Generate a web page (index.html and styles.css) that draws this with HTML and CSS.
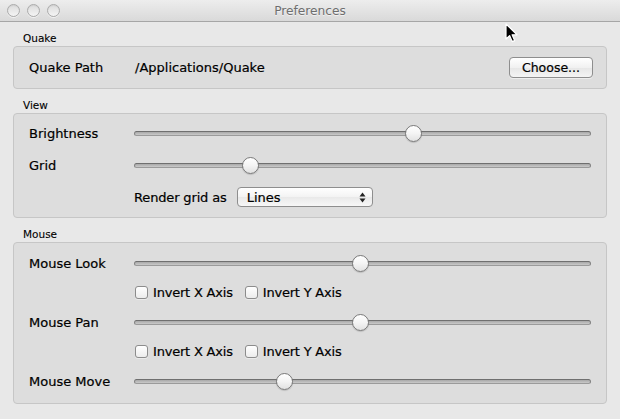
FILE: index.html
```html
<!DOCTYPE html>
<html>
<head>
<meta charset="utf-8">
<title>Preferences</title>
<link rel="stylesheet" href="styles.css">
</head>
<body>
<div class="window">
  <div class="titlebar">
    <div class="lights">
      <span class="light"></span>
      <span class="light"></span>
      <span class="light"></span>
    </div>
    <div class="title">Preferences</div>
  </div>

  <div class="content">
    <div class="section first">
      <div class="section-label">Quake</div>
      <div class="group group-quake">
        <div class="row">
          <div class="row-label">Quake Path</div>
          <div class="path">/Applications/Quake</div>
          <button class="btn">Choose...</button>
        </div>
      </div>
    </div>

    <div class="section">
      <div class="section-label">View</div>
      <div class="group group-view">
        <div class="row">
          <div class="row-label">Brightness</div>
          <div class="slider"><div class="track"></div><div class="knob" style="left:61.1%"></div></div>
        </div>
        <div class="row">
          <div class="row-label">Grid</div>
          <div class="slider"><div class="track"></div><div class="knob" style="left:25.4%"></div></div>
        </div>
        <div class="row">
          <div class="row-label"></div>
          <div class="inline-label">Render grid as</div>
          <div class="popup"><span class="popup-text">Lines</span>
            <svg class="popup-arrows" width="7" height="11" viewBox="0 0 7 11"><path d="M3.5 0.5 L6.5 4.5 L0.5 4.5 Z M0.5 6.5 L6.5 6.5 L3.5 10.5 Z" fill="#222"/></svg>
          </div>
        </div>
      </div>
    </div>

    <div class="section">
      <div class="section-label">Mouse</div>
      <div class="group group-mouse">
        <div class="row row-slider">
          <div class="row-label">Mouse Look</div>
          <div class="slider"><div class="track"></div><div class="knob" style="left:49.5%"></div></div>
        </div>
        <div class="row row-check">
          <div class="row-label"></div>
          <label class="check"><span class="box"></span>Invert X Axis</label>
          <label class="check"><span class="box"></span>Invert Y Axis</label>
        </div>
        <div class="row row-slider">
          <div class="row-label">Mouse Pan</div>
          <div class="slider"><div class="track"></div><div class="knob" style="left:49.5%"></div></div>
        </div>
        <div class="row row-check">
          <div class="row-label"></div>
          <label class="check"><span class="box"></span>Invert X Axis</label>
          <label class="check"><span class="box"></span>Invert Y Axis</label>
        </div>
        <div class="row row-slider">
          <div class="row-label">Mouse Move</div>
          <div class="slider"><div class="track"></div><div class="knob" style="left:33%"></div></div>
        </div>
      </div>
    </div>
  </div>

  <svg class="cursor" width="14" height="21" viewBox="0 0 14 21">
    <path d="M1 1 L1 16 L4.6 12.6 L7.2 18.6 L9.6 17.6 L7.1 11.8 L12 11.8 Z" fill="#000" stroke="#fff" stroke-width="1.2" stroke-linejoin="round"/>
  </svg>
</div>
</body>
</html>
```

FILE: styles.css
```css
* { box-sizing: border-box; }
html, body {
  margin: 0;
  padding: 0;
  background: #e8e8e8;
}
body {
  font-family: "DejaVu Sans", "Liberation Sans", sans-serif;
  color: #000;
}
.window {
  position: relative;
  width: 620px;
  height: 419px;
  background: #e8e8e8;
  overflow: hidden;
}
.titlebar {
  position: relative;
  height: 22px;
  background: linear-gradient(#ededed, #d9d9d9);
  border-bottom: 1px solid #a6a6a6;
  display: flex;
  align-items: center;
}
.lights {
  display: flex;
  gap: 7px;
  padding-left: 7px;
}
.light {
  width: 13px;
  height: 13px;
  border-radius: 50%;
  border: 1px solid #ababab;
  background: linear-gradient(#dcdcdc, #f4f4f4);
  box-shadow: inset 0 1px 1px rgba(0,0,0,0.06), 0 1px 0 rgba(255,255,255,0.6);
}
.title {
  position: absolute;
  left: 0;
  right: 0;
  top: 0;
  height: 21px;
  line-height: 22px;
  text-align: center;
  font-size: 12.2px;
  color: #6e6e6e;
  text-shadow: 0 1px 0 rgba(255,255,255,0.6);
}
.content {
  padding: 0 13px;
}
.section { margin-top: 9px; }
.section-label {
  font-size: 10.5px;
  line-height: 15px;
  height: 15px;
  padding-left: 10px;
  -webkit-text-stroke: 0.1px #000;
}
.group {
  border: 1px solid #c6c6c6;
  border-radius: 4px;
  background: #dddddd;
  padding: 0 15px;
}
.group-quake {
  height: 43px;
  display: flex;
  align-items: center;
  padding-right: 13px;
}
.group-quake .row { flex: 1; height: 41px; }
.group-view {
  height: 105px;
  padding-top: 3px;
}
.group-view .row { height: 32px; }
.group-mouse {
  height: 162px;
  padding-top: 5px;
}
.row {
  display: flex;
  align-items: center;
}
.row-slider { height: 30px; }
.row-check { height: 29px; }
.row-label,
.path,
.inline-label,
.check,
.popup,
.btn {
  -webkit-text-stroke: 0.2px #000;
}
.row-label {
  width: 105px;
  flex: none;
  font-size: 13px;
}
.path {
  font-size: 13px;
  flex: 1;
  padding-left: 1px;
}
.btn {
  font-family: inherit;
  font-size: 12.5px;
  color: #000;
  width: 84px;
  height: 21px;
  padding: 0;
  border: 1px solid #8e8e8e;
  border-radius: 4px;
  background: linear-gradient(#ffffff, #f1f1f1 50%, #e6e6e6 51%, #f4f4f4);
  box-shadow: 0 1px 0 rgba(255,255,255,0.5);
  line-height: 19px;
}
.slider {
  position: relative;
  flex: 1;
  height: 20px;
  display: flex;
  align-items: center;
}
.track {
  width: 100%;
  height: 5px;
  border-radius: 3px;
  border: 1px solid #838383;
  border-top-color: #6f6f6f;
  border-bottom-color: #9a9a9a;
  background: linear-gradient(#a8a8a8, #c9c9c9);
}
.knob {
  position: absolute;
  top: 50%;
  width: 17px;
  height: 17px;
  margin-left: -8.5px;
  margin-top: -8.5px;
  border-radius: 50%;
  border: 1px solid #7a7a7a;
  background: linear-gradient(#ffffff, #f4f4f4 50%, #e2e2e2);
  box-shadow: 0 1px 1px rgba(0,0,0,0.15);
}
.inline-label {
  font-size: 13px;
  margin-right: 10px;
  letter-spacing: -0.15px;
}
.popup {
  position: relative;
  width: 136px;
  height: 20px;
  border: 1px solid #8e8e8e;
  border-radius: 4px;
  background: linear-gradient(#ffffff, #f3f3f3 50%, #e9e9e9 51%, #f7f7f7);
  display: flex;
  align-items: center;
  padding-left: 9px;
  font-size: 13px;
}
.popup-text { flex: 1; }
.popup-arrows {
  margin-right: 6px;
}
.check {
  display: flex;
  align-items: center;
  font-size: 13px;
  margin-left: 1px;
  margin-right: 11px;
  letter-spacing: -0.2px;
}
.box {
  width: 13px;
  height: 13px;
  border: 1px solid #8c8c8c;
  border-radius: 3px;
  background: linear-gradient(#ffffff, #ececec);
  margin-right: 5px;
  box-shadow: 0 1px 0 rgba(255,255,255,0.4);
}
.cursor {
  position: absolute;
  left: 505px;
  top: 23px;
}
```
